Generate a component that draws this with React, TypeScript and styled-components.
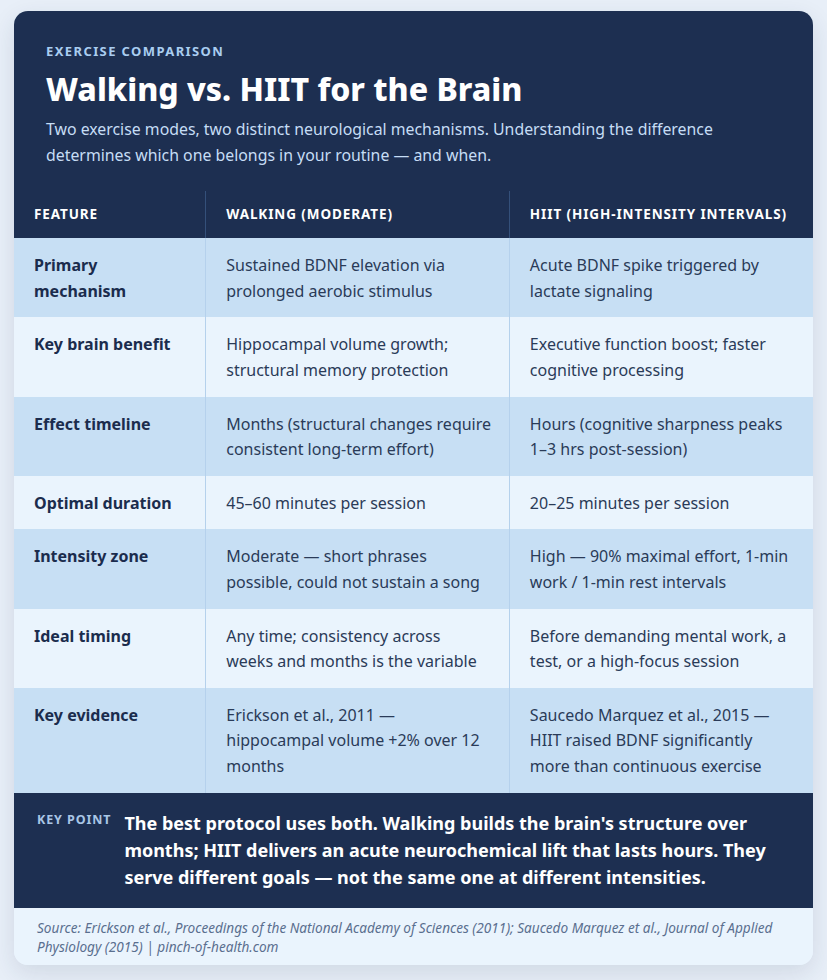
import React from "react";
import styled, { createGlobalStyle } from "styled-components";

const GlobalStyle = createGlobalStyle`
  html, body {
    margin: 0;
    padding: 0;
    background: #e8eff8;
    font-family: "Noto Sans", "Open Sans", sans-serif;
  }
  * { box-sizing: border-box; }
`;

const Page = styled.div`
  padding: 11px 14px 15px;
`;

const Card = styled.article`
  width: 799px;
  border-radius: 14px;
  overflow: hidden;
  background: #eaf4fd;
  box-shadow: 0 8px 24px rgba(30, 47, 82, 0.12);
`;

const Header = styled.header`
  background: #1d2f51;
  padding: 32px 32px 23px;
`;

const Eyebrow = styled.div`
  font-size: 13px;
  line-height: 16px;
  font-weight: 700;
  letter-spacing: 1.4px;
  text-transform: uppercase;
  color: #a9cdf0;
  margin-bottom: 12px;
`;

const Title = styled.h1`
  margin: 0 0 10px;
  font-size: 32px;
  line-height: 36px;
  font-weight: 800;
  color: #ffffff;
`;

const Subtitle = styled.p`
  margin: 0;
  font-size: 15.85px;
  line-height: 25.6px;
  color: #c6ddf5;
`;

const Table = styled.table`
  width: 100%;
  border-collapse: collapse;
  table-layout: fixed;
`;

const HeadCell = styled.th`
  background: #1d2f51;
  color: #ffffff;
  text-align: left;
  font-size: 13.5px;
  font-weight: 700;
  letter-spacing: 0.9px;
  text-transform: uppercase;
  line-height: 21px;
  padding: 13px 12px 13px 20px;
  white-space: nowrap;
  & + & {
    border-left: 1px solid #34507a;
  }
`;

const Row = styled.tr<{ $alt: boolean }>`
  background: ${(p) => (p.$alt ? "#eaf4fd" : "#c7dff4")};
`;

const LabelCell = styled.td`
  vertical-align: top;
  padding: 15px 16px 13px 20px;
  font-size: 16px;
  line-height: 1.6;
  font-weight: 700;
  color: #1b2c4d;
`;

const ValueCell = styled.td`
  vertical-align: top;
  padding: 15px 14px 13px 20px;
  font-size: 16px;
  line-height: 1.6;
  color: #2a3b58;
  border-left: 1px solid #b5d1ec;
`;

const KeyPoint = styled.section`
  background: #1d2f51;
  display: flex;
  align-items: flex-start;
  gap: 13px;
  padding: 17px 24px 17px 23px;
`;

const KeyLabel = styled.span`
  flex-shrink: 0;
  font-size: 12.5px;
  line-height: 20px;
  font-weight: 700;
  letter-spacing: 0.9px;
  color: #a9c6e6;
  text-transform: uppercase;
`;

const KeyText = styled.p`
  margin: 0;
  font-size: 18px;
  line-height: 27px;
  font-weight: 700;
  color: #ffffff;
`;

const Footer = styled.footer`
  background: #eaf4fd;
  padding: 10px 24px 8px 23px;
  font-size: 13.6px;
  line-height: 19.5px;
  font-style: italic;
  color: #5a6f8f;
`;

const NB = "\u00a0";

const rows: [string, string, string][] = [
  [
    "Primary mechanism",
    "Sustained BDNF elevation via prolonged aerobic stimulus",
    "Acute BDNF spike triggered by lactate signaling",
  ],
  [
    "Key brain benefit",
    "Hippocampal volume growth; structural memory protection",
    "Executive function boost; faster cognitive processing",
  ],
  [
    "Effect timeline",
    "Months (structural changes require consistent long-term effort)",
    "Hours (cognitive sharpness peaks 1–3 hrs post-session)",
  ],
  ["Optimal duration", "45–60 minutes per session", "20–25 minutes per session"],
  [
    "Intensity zone",
    "Moderate — short phrases possible, could not sustain a song",
    "High — 90% maximal effort, 1-min work / 1-min rest intervals",
  ],
  [
    "Ideal timing",
    `Any time; consistency across weeks${NB}and months is the variable`,
    "Before demanding mental work, a test, or a high-focus session",
  ],
  [
    "Key evidence",
    "Erickson et al., 2011 — hippocampal volume +2% over 12 months",
    `Saucedo Marquez et al., 2015 — HIIT raised BDNF significantly more${NB}than continuous exercise`,
  ],
];

export default function App() {
  return (
    <>
      <GlobalStyle />
      <Page>
        <Card>
          <Header>
            <Eyebrow>Exercise Comparison</Eyebrow>
            <Title>Walking vs. HIIT for the Brain</Title>
            <Subtitle>
              Two exercise modes, two distinct neurological mechanisms. Understanding the difference
              determines which one belongs in your routine — and when.
            </Subtitle>
          </Header>
          <Table>
            <colgroup>
              <col style={{ width: "24%" }} />
              <col style={{ width: "38%" }} />
              <col style={{ width: "38%" }} />
            </colgroup>
            <thead>
              <tr>
                <HeadCell>Feature</HeadCell>
                <HeadCell>Walking (Moderate)</HeadCell>
                <HeadCell>HIIT (High-Intensity Intervals)</HeadCell>
              </tr>
            </thead>
            <tbody>
              {rows.map(([label, walk, hiit], i) => (
                <Row key={label} $alt={i % 2 === 1}>
                  <LabelCell>{label}</LabelCell>
                  <ValueCell>{walk}</ValueCell>
                  <ValueCell>{hiit}</ValueCell>
                </Row>
              ))}
            </tbody>
          </Table>
          <KeyPoint>
            <KeyLabel>Key Point</KeyLabel>
            <KeyText>
              The best protocol uses both. Walking builds the brain's structure over months; HIIT
              delivers an acute neurochemical lift that lasts hours. They serve different goals — not
              the same one at different intensities.
            </KeyText>
          </KeyPoint>
          <Footer>
            Source: Erickson et al., Proceedings of the National Academy of Sciences (2011); Saucedo
            Marquez et al., Journal of Applied Physiology (2015) | pinch-of-health.com
          </Footer>
        </Card>
      </Page>
    </>
  );
}
